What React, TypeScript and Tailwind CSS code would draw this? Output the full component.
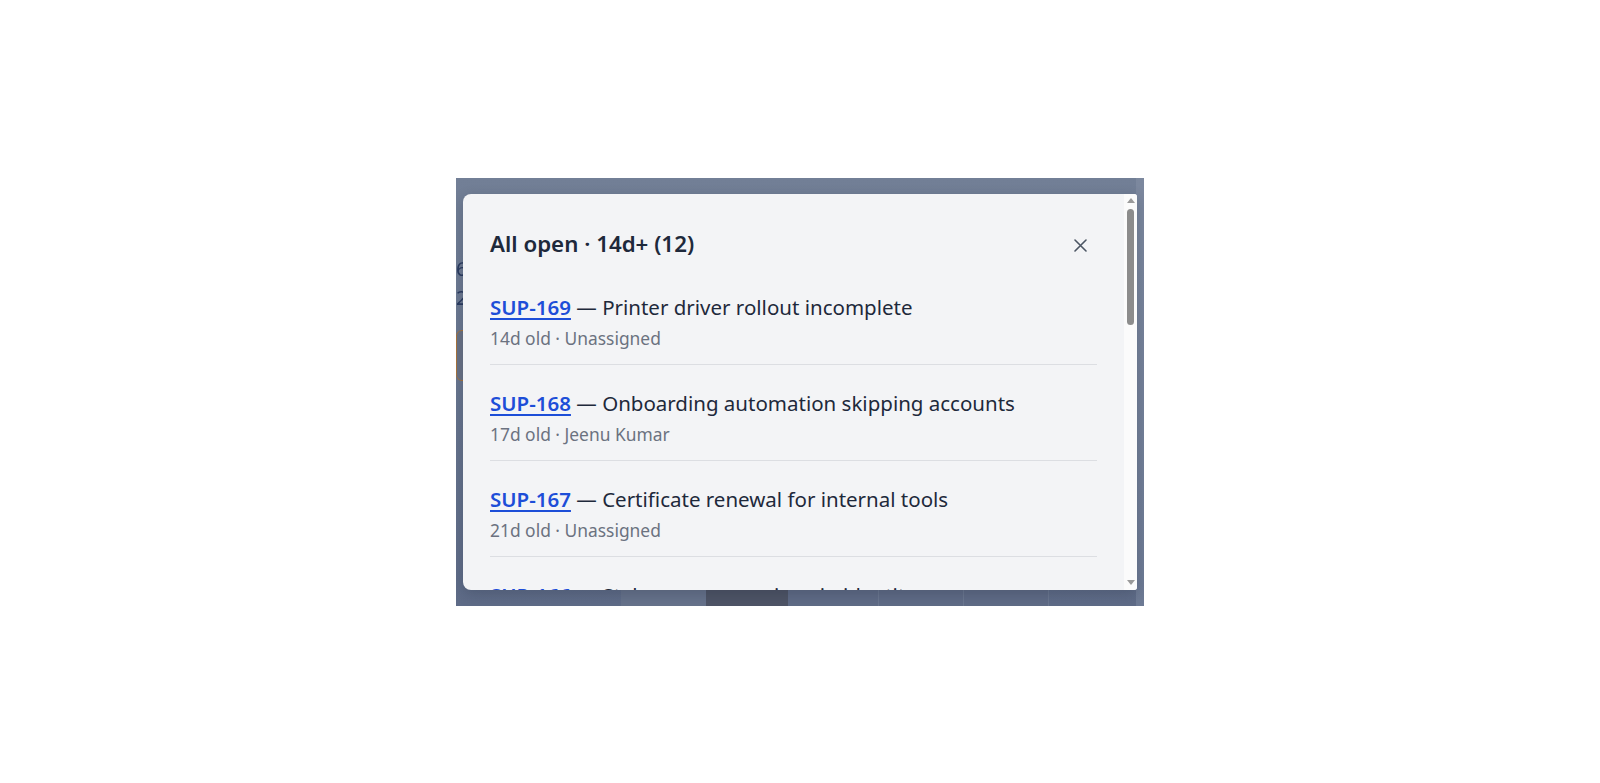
import React from "react";

type Ticket = { id: string; title: string; age: number; owner: string };

const tickets: Ticket[] = [
  { id: "SUP-169", title: "Printer driver rollout incomplete", age: 14, owner: "Unassigned" },
  { id: "SUP-168", title: "Onboarding automation skipping accounts", age: 17, owner: "Jeenu Kumar" },
  { id: "SUP-167", title: "Certificate renewal for internal tools", age: 21, owner: "Unassigned" },
  { id: "SUP-166", title: "Stale group mappings in identity sync", age: 22, owner: "Unassigned" },
  { id: "SUP-165", title: "VPN client update failing on macOS", age: 24, owner: "Jeenu Kumar" },
  { id: "SUP-164", title: "Shared mailbox permissions out of sync", age: 26, owner: "Unassigned" },
  { id: "SUP-163", title: "Laptop imaging queue stalled", age: 29, owner: "Unassigned" },
  { id: "SUP-162", title: "License audit for design tools", age: 31, owner: "Jeenu Kumar" },
  { id: "SUP-161", title: "Wi-Fi drops in meeting rooms", age: 34, owner: "Unassigned" },
  { id: "SUP-160", title: "Backup job alerts not delivered", age: 38, owner: "Unassigned" },
  { id: "SUP-159", title: "SSO login loop for contractors", age: 41, owner: "Jeenu Kumar" },
  { id: "SUP-158", title: "Asset tags missing in inventory", age: 45, owner: "Unassigned" },
];

const font = { fontFamily: '"Segoe UI", "Noto Sans", "Open Sans", sans-serif' };

function CloseIcon() {
  return (
    <svg width="13" height="13" viewBox="0 0 13 13" fill="none" stroke="currentColor" strokeWidth="1.6" strokeLinecap="round">
      <path d="M1 1 L12 12 M12 1 L1 12" />
    </svg>
  );
}

function Arrow({ down = false }: { down?: boolean }) {
  return (
    <svg width="8" height="5" viewBox="0 0 8 5" fill="#9a9a9a">
      {down ? <path d="M0 0 H8 L4 5 Z" /> : <path d="M0 5 H8 L4 0 Z" />}
    </svg>
  );
}

// vertical scrollbar for the ticket list
function ScrollRail() {
  return (
    <div className="flex w-[13px] shrink-0 flex-col items-center bg-[#fbfbfb]">
      <div className="flex h-[14px] items-center justify-center">
        <Arrow />
      </div>
      <div className="mt-[1px] h-[116px] w-[7px] rounded-full bg-[#8c8c8c]" />
      <div className="flex-1" />
      <div className="flex h-[14px] items-center justify-center">
        <Arrow down />
      </div>
    </div>
  );
}

function Backdrop() {
  return (
    <div className="flex h-full w-full bg-gradient-to-b from-[#727f96] to-[#5e6b87] blur-[0.5px]">
      <div className="flex flex-1 flex-col">
        <div className="flex flex-col pt-[76px] text-[20px] leading-[29px] text-[#2a3a5f]">
          <span>64 open</span>
          <span>27 waiting</span>
        </div>
        <div className="mt-[18px] h-[51px] w-[220px] rounded-md border-[1.5px] border-[#a8743c] bg-[#697286]" />
        <div className="mt-auto ml-[165px] flex h-[30px]">
          <div className="w-[85px] bg-[#66728b]" />
          <div className="w-[82px] rounded-t-md bg-[#4e5466]" />
          <div className="w-[91px] border-r border-[#6b7790] bg-[#5f6b86]" />
          <div className="w-[85px] border-r border-[#6b7790] bg-[#5f6b86]" />
          <div className="w-[85px] border-r border-[#6b7790] bg-[#5f6b86]" />
        </div>
      </div>
      <div className="w-[8px] bg-gradient-to-b from-[#7c889e] to-[#6d7a94]" />
    </div>
  );
}

export default function App() {
  return (
    <div className="flex min-h-screen w-full items-center justify-center bg-white" style={font}>
      <div className="relative h-[428px] w-[688px] overflow-hidden">
        <Backdrop />
        <div className="absolute inset-0 flex items-start pl-[7px] pt-[16px]">
          <div
            role="dialog"
            className="flex h-[396px] w-[674px] overflow-hidden rounded-l-lg rounded-r-[3px] bg-[#f3f4f6] shadow-[0_4px_14px_rgba(15,23,42,0.2)]"
          >
            <div className="min-w-0 flex-1 overflow-hidden">
              <div className="flex items-start justify-between pl-[27px] pr-[30px] pt-[36px] pb-[9px]">
                <h2 className="text-[22.3px] font-semibold leading-[28px] text-[#1e293b]">All open · 14d+ (12)</h2>
                <button className="mt-[2px] flex h-[28px] w-[28px] items-center justify-center text-[#4b5563]" aria-label="Close">
                  <CloseIcon />
                </button>
              </div>
              <ul className="px-[27px] pb-[27px]">
                {tickets.map((t) => (
                  <li key={t.id} className="border-b border-[#dcdee2] pt-[24px] pb-[14px]">
                    <div className="whitespace-nowrap text-[20.5px] leading-[28px] text-[#1e293b]">
                      <a href="#" className="font-semibold text-[#1d4ed8] underline underline-offset-[3px]">
                        {t.id}
                      </a>{" "}
                      — {t.title}
                    </div>
                    <div className="mt-[5px] text-[17.4px] leading-[24px] text-[#6b7280]">
                      {t.age}d old · {t.owner}
                    </div>
                  </li>
                ))}
              </ul>
            </div>
            <ScrollRail />
          </div>
        </div>
      </div>
    </div>
  );
}
